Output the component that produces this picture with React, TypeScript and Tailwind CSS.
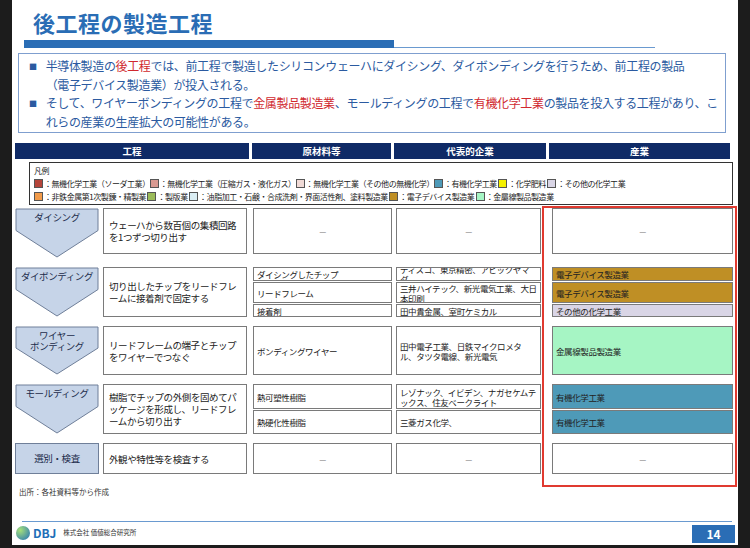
import React from "react";

const F = { fontFamily: '"Noto Sans CJK JP","Noto Sans",sans-serif' };

function Chev({ label, h, shape = true }: { label: React.ReactNode; h: number; shape?: boolean }) {
  return (
    <div className="relative w-[84px] shrink-0" style={{ height: h }}>
      {shape ? (
        <svg width="84" height={h} className="absolute inset-0">
          <polygon points={`1,1 83,1 83,${h * 0.45} 42,${h - 1} 1,${h * 0.45}`} fill="#c6d4e8" stroke="#6f7f99" strokeWidth="1" />
        </svg>
      ) : (
        <div className="absolute inset-0 bg-[#c6d4e8] border border-[#6f7f99]" />
      )}
      <div className={`relative text-[9.5px] leading-[11px] tracking-[-0.4px] text-[#1b2b4a] text-center ${shape ? "pt-[4px]" : "h-full flex items-center justify-center"}`}>{label}</div>
    </div>
  );
}

const box = "border border-[#7a7a7a] text-[8.5px] leading-[10px] tracking-[-0.4px] text-[#222] px-[3px] flex items-center overflow-hidden";

function Cells({ list, w, ml }: { list: any[]; w: number; ml: number }) {
  return (
    <div className="flex flex-col gap-[1px]" style={{ width: w, marginLeft: ml }}>
      {list.map((m: any, i: number) => (
        <div key={i} className={`${box} ${m[1] || "bg-white"}`} style={{ height: m[2] }}>{m[0]}</div>
      ))}
    </div>
  );
}

function Row({ chev, h, dh, desc, mats, cos, inds, shape = true }: any) {
  return (
    <div className="flex" style={{ height: h }}>
      <Chev label={chev} h={h} shape={shape} />
      <div className={`${box} bg-white w-[144px] ml-[4px] px-[5px] text-[9.5px] leading-[12px] self-start`} style={{ height: dh }}>{desc}</div>
      <Cells list={mats} w={139} ml={6} />
      <Cells list={cos} w={145} ml={4} />
      <Cells list={inds} w={181} ml={11} />
    </div>
  );
}

const Sw = ({ c }: { c: string }) => <span className="inline-block w-[9px] h-[9px] border border-[#555] align-[-1px] mr-[1px]" style={{ background: c }} />;

export default function App() {
  const dash = "justify-center text-[#888] bg-white";
  return (
    <div style={F} className="w-[750px] h-[548px] bg-[#1c1c1c] pl-[12px] pr-[12px] overflow-hidden">
      <div className="bg-white h-[545px] relative px-[3px]">
        <div className="text-[22px] font-bold text-[#2a6db5] pl-[18px] pt-[8px] leading-[28px] tracking-[0.5px]">後工程の製造工程</div>
        <div className="flex items-end ml-[9px] mt-[4px] h-[8px]">
          <div className="w-[370px] h-[8px] bg-[#2a6db5]" />
          <div className="w-[261px] h-[1px] bg-[#6a9ad0]" />
        </div>
        <div className="ml-[3px] mt-[5px] border border-[#7f9fcf] pl-[10px] pr-[4px] py-[3px] text-[12px] leading-[18.5px] tracking-[-0.35px] text-[#2b5aa0] w-[708px] h-[80px]">
          <div className="flex"><span className="text-[8px] mr-[9px] mt-[1px]">■</span><span>半導体製造の<span className="text-[#d0282e]">後工程</span>では、前工程で製造したシリコンウェーハにダイシング、ダイボンディングを行うため、前工程の製品<br />（電子デバイス製造業）が投入される。</span></div>
          <div className="flex"><span className="text-[8px] mr-[9px] mt-[1px]">■</span><span>そして、ワイヤーボンディングの工程で<span className="text-[#d0282e]">金属製品製造業</span>、モールディングの工程で<span className="text-[#d0282e]">有機化学工業</span>の製品を投入する工程があり、これらの産業の生産拡大の可能性がある。</span></div>
        </div>
        <div className="flex gap-[3px] mt-[10px] text-white text-[9.5px] font-bold h-[16px]">
          {[["工程", 234], ["原材料等", 139], ["代表的企業", 152], ["産業", 181]].map(([t, w]) => (
            <div key={t as string} className="bg-[#0f2a66] flex items-center justify-center" style={{ width: w as number }}>{t}</div>
          ))}
        </div>
        <div className="ml-[14px] mt-[3px] w-[704px] h-[43px] border border-[#333] px-[4px] pt-[1px] text-[8px] leading-[13px] tracking-[-0.45px] text-[#222] overflow-hidden">
          <div>凡例</div>
          <div className="whitespace-nowrap"><Sw c="#b5453a" />：無機化学工業（ソーダ工業）<Sw c="#d99a92" />：無機化学工業（圧縮ガス・液化ガス）<Sw c="#f0dad6" />：無機化学工業（その他の無機化学）<Sw c="#4e9ab8" />：有機化学工業 <Sw c="#f4f000" />：化学肥料 <Sw c="#d9d5e6" />：その他の化学工業</div>
          <div className="whitespace-nowrap"><Sw c="#f29b4a" />：非鉄金属第1次製錬・精製業 <Sw c="#9bbb59" />：製版業 <Sw c="#dbeef4" />：油脂加工・石鹸・合成洗剤・界面活性剤、塗料製造業 <Sw c="#bf8f25" />：電子デバイス製造業 <Sw c="#a6f5c4" />：金屬線製品製造業</div>
        </div>
        <div className="flex flex-col gap-[9px] mt-[3px]">
          <Row chev="ダイシング" h={50} dh={46} desc="ウェーハから数百個の集積回路を1つずつ切り出す"
            mats={[["－", dash, 46]]} cos={[["－", dash, 46]]} inds={[["－", dash, 46]]} />
          <Row chev="ダイボンディング" h={50} dh={50} desc="切り出したチップをリードフレームに接着剤で固定する"
            mats={[["ダイシングしたチップ", "", 14], ["リードフレーム", "", 21], ["接着剤", "", 13]]}
            cos={[["ディスコ、東京精密、アピックヤマダ", "", 14], ["三井ハイテック、新光電気工業、大日本印刷", "", 21], ["田中貴金属、室町ケミカル", "", 13]]}
            inds={[["電子デバイス製造業", "bg-[#bf8f25]", 14], ["電子デバイス製造業", "bg-[#bf8f25]", 21], ["その他の化学工業", "bg-[#d9d5e6]", 13]]} />
          <Row chev={<>ワイヤー<br />ボンディング</>} h={49} dh={49} desc="リードフレームの端子とチップをワイヤーでつなぐ"
            mats={[["ボンディングワイヤー", "", 49]]} cos={[["田中電子工業、日鉄マイクロメタル、タツタ電線、新光電気", "", 49]]}
            inds={[["金属線製品製造業", "bg-[#a6f5c4]", 49]]} />
          <Row chev="モールディング" h={50} dh={50} desc="樹脂でチップの外側を固めてパッケージを形成し、リードフレームから切り出す"
            mats={[["熱可塑性樹脂", "", 25], ["熱硬化性樹脂", "", 24]]}
            cos={[["レゾナック、イビデン、ナガセケムテックス、住友ベークライト", "", 25], ["三菱ガス化学、", "", 24]]}
            inds={[["有機化学工業", "bg-[#4e9ab8]", 25], ["有機化学工業", "bg-[#4e9ab8]", 24]]} />
          <Row chev="選別・検査" h={31} dh={31} shape={false} desc="外観や特性等を検査する"
            mats={[["－", dash, 31]]} cos={[["－", dash, 31]]} inds={[["－", dash, 31]]} />
        </div>
        <div className="absolute left-[530px] top-[206px] w-[195px] h-[281px] border-[2px] border-[#e03a30]" />
        <div className="text-[7.5px] text-[#333] ml-[4px] mt-[12px]">出所：各社資料等から作成</div>
        <div className="absolute left-[10px] right-[6px] top-[521px] h-[1px] bg-[#6a9ad0]" />
        <div className="absolute left-[4px] top-[524px] flex items-center gap-[3px]">
          <div className="w-[14px] h-[14px] rounded-full bg-[radial-gradient(circle_at_30%_30%,#a5e07a,#1f6fb8)]" />
          <span className="text-[12px] font-bold text-[#1f6fb8]">DBJ</span>
          <span className="text-[6.5px] text-[#333] ml-[4px]">株式会社 価値総合研究所</span>
        </div>
        <div className="absolute right-[3px] top-[525px] w-[43px] h-[18px] bg-[#2a6db5] text-white text-[12px] font-bold flex items-center justify-center">14</div>
      </div>
    </div>
  );
}
